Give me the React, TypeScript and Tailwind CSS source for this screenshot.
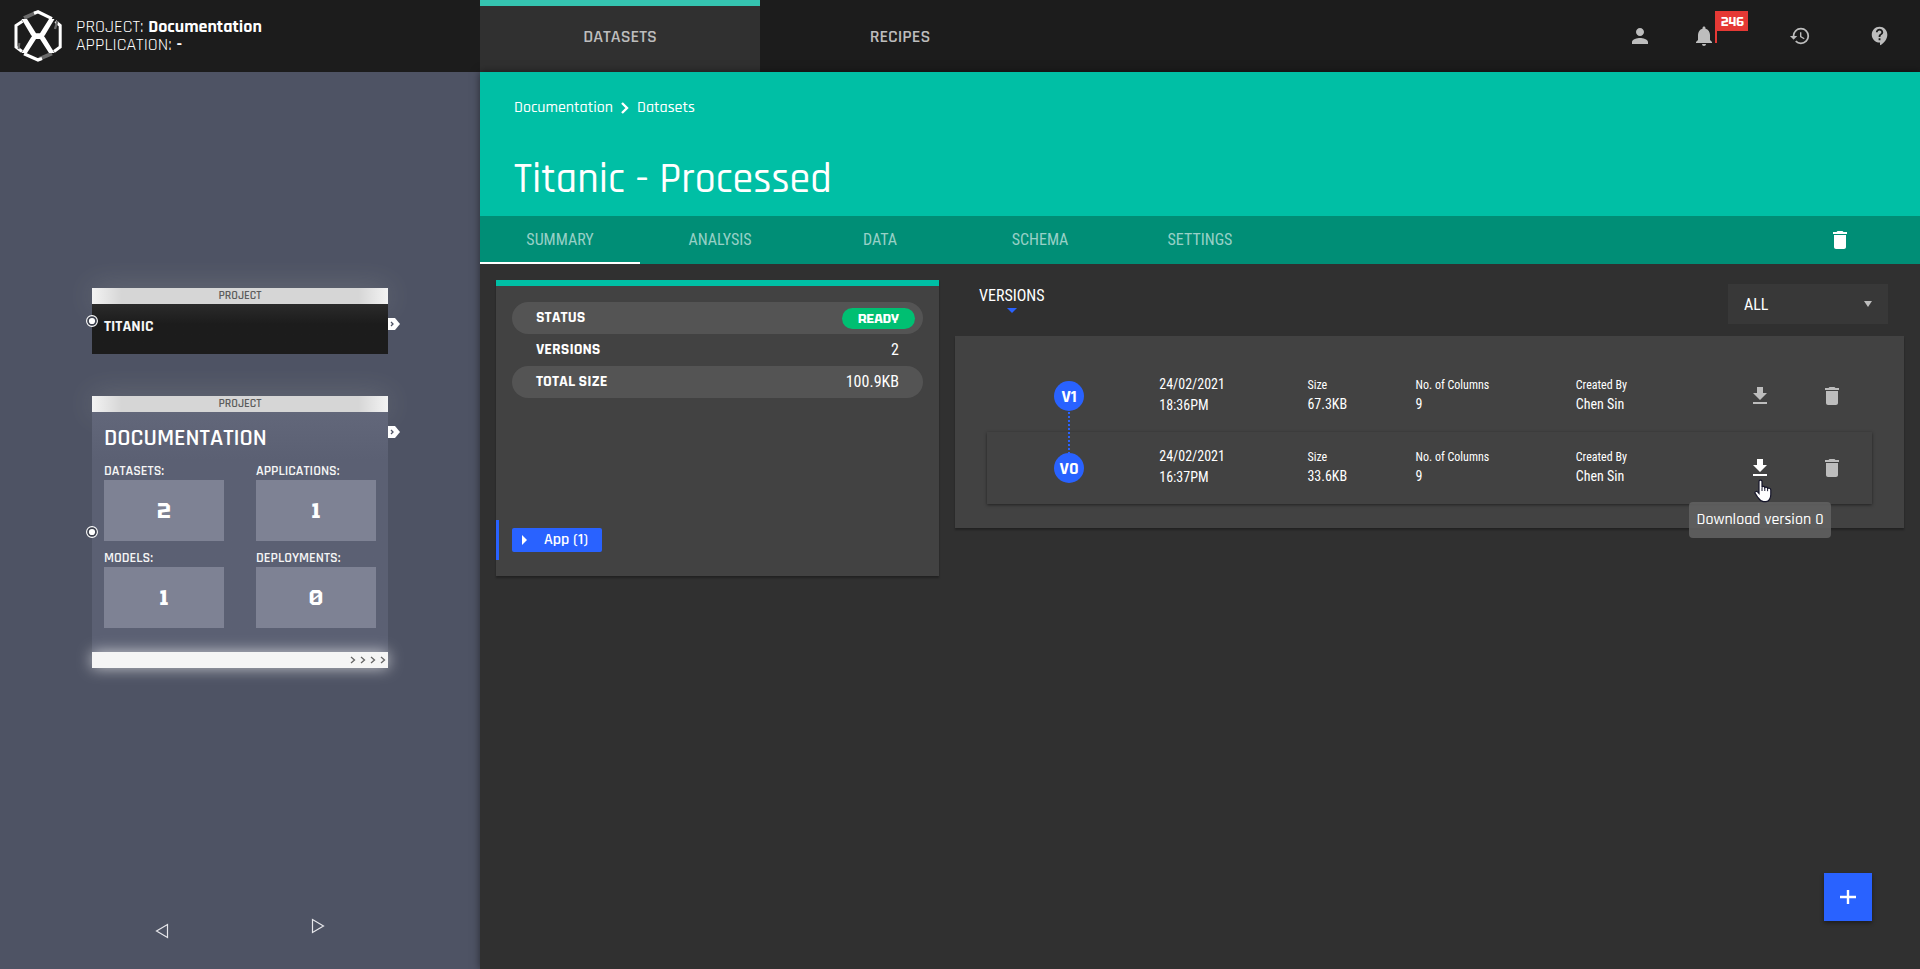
import type { ReactNode } from "react";
import {
  MdContactSupport,
  MdDelete,
  MdHistory,
  MdNotifications,
  MdPerson,
} from "react-icons/md";

function Logo() {
  return (
    <svg viewBox="0 0 48 52" className="h-[52px] w-12" fill="none" aria-hidden="true">
      <path d="M10 8 22 2.6" stroke="#6b6b6b" strokeWidth="3.6" />
      <path d="M20 3.2 24 1.8 38 8.6" stroke="#fff" strokeWidth="3.2" />
      <path d="M38 43.5 25 49" stroke="#6b6b6b" strokeWidth="3.6" />
      <path d="M10 43.8 24 50 28 48.6" stroke="#fff" strokeWidth="3.2" />
      <path d="M8.5 11.2 2 15.5V37L8 41.5" stroke="#fff" strokeWidth="3" />
      <path d="M41.5 11.5 46.2 15.5V37L40 41.5" stroke="#fff" strokeWidth="3" />
      <path d="M43.4 11 41 19" stroke="#6b6b6b" strokeWidth="2.4" />
      <path d="M5.4 33 4.6 39" stroke="#6b6b6b" strokeWidth="2" />
      <path d="M7.5 9H13L22 23.2H26L35 9H40.5L31 25 30 26.2 31 27.5 40.5 43H35L26 29H22L13 43H7.5L17 27.5 18 26.2 17 25Z" fill="#fff" />
    </svg>
  );
}

function DownloadIcon() {
  return (
    <svg viewBox="0 0 24 24" className="size-6" fill="currentColor" aria-hidden="true">
      <path d="M19 9h-4V3H9v6H5l7 7 7-7zM5 18v2h14v-2H5z" />
    </svg>
  );
}

function HandCursor() {
  return (
    <svg viewBox="0 0 18 24" className="h-6 w-[18px]" aria-hidden="true">
      <path
        d="M5 2.4C5 .6 8 .6 8 2.4V8.2C8.4 7 10.6 7.2 10.8 8.6 11.4 7.8 13.4 8 13.6 9.4 14.4 8.8 16.8 9.2 16.8 11V15.5C16.8 19 15 22.6 12 22.6H9.6C6.4 22.6 5 20 3.6 18L1.2 14.4C.4 13 2.4 11.6 3.6 12.8L5 14.4Z"
        fill="#fff"
        stroke="#15152a"
        strokeWidth="1.2"
      />
      <path d="M8 8.5V12M10.8 8.8V12M13.6 9.6V12.2" stroke="#15152a" />
    </svg>
  );
}

function Port() {
  return (
    <svg viewBox="0 0 12 12" className="size-3" fill="none" aria-hidden="true">
      <circle cx="6" cy="6" r="5.4" fill="#3c404d" stroke="#fff" strokeWidth="1.1" />
      <circle cx="6" cy="6" r="3.1" fill="#fff" />
    </svg>
  );
}

function Tag() {
  return (
    <svg viewBox="0 0 12 12" className="size-3" fill="none" aria-hidden="true">
      <path d="M0 0H7L12 6 7 12H0Z" fill="#fff" />
      <path d="M3 4 5 6 3 8" stroke="#4e5364" strokeWidth="1.3" />
    </svg>
  );
}

function CardHeader() {
  return (
    <div className="flex h-4 items-center justify-center bg-[linear-gradient(90deg,#f3f3f3,#d6d6d6_10%,#d6d6d6_90%,#f3f3f3)] text-xs font-semibold text-[#5c5c5c] shadow-[0_0_30px_rgba(245,245,220,0.2)]">
      PROJECT
    </div>
  );
}

function Stat({ label, value }: { label: string; value: number }) {
  return (
    <div>
      <dt className="h-[18px] text-sm leading-[18px] font-semibold">{label}</dt>
      <dd className="flex h-[61px] items-center justify-center bg-[#7e8294] font-['Tektur',sans-serif] text-[22px] font-bold text-white slashed-zero">
        {value}
      </dd>
    </div>
  );
}

function Sidebar() {
  return (
    <aside className="flex w-[480px] shrink-0 flex-col justify-between bg-[#4e5364] text-[#f5f5f5]">
      <div className="mx-auto mt-[216px] flex w-[296px] flex-col gap-[42px]">
        <section className="relative">
          <CardHeader />
          <div className="flex h-[50px] items-center bg-gradient-to-b from-[#2b2b2b] to-[#1c1c1c] to-40% px-3">
            <h2 className="pb-1 text-base font-bold">TITANIC</h2>
          </div>
          <span className="absolute top-[27px] -left-1.5"><Port /></span>
          <span className="absolute top-[30px] left-full"><Tag /></span>
        </section>
        <section className="relative">
          <CardHeader />
          <div className="h-60 bg-gradient-to-b from-[#62677a] to-[#5b6073] to-20% px-3 pt-2.5">
            <h2 className="text-2xl leading-8 font-semibold text-white">DOCUMENTATION</h2>
            <dl className="mt-2 grid grid-cols-2 gap-x-8 gap-y-2">
              <Stat label="DATASETS:" value={2} />
              <Stat label="APPLICATIONS:" value={1} />
              <Stat label="MODELS:" value={1} />
              <Stat label="DEPLOYMENTS:" value={0} />
            </dl>
          </div>
          <div className="flex h-4 items-center justify-end gap-1 bg-[#f5f5f5] pr-0.5 shadow-[0_0_15px_rgba(255,255,255,0.7)]">
            {[0, 1, 2, 3].map((n) => (
              <svg key={n} viewBox="0 0 6 8" className="h-2 w-1.5" fill="none" aria-hidden="true">
                <path d="M1 1 4.5 4 1 7" stroke="#666" strokeWidth="1.3" />
              </svg>
            ))}
          </div>
          <span className="absolute top-[130px] -left-1.5"><Port /></span>
          <span className="absolute top-[30px] left-full"><Tag /></span>
        </section>
      </div>
      <nav className="mb-[30px] flex h-[21px] justify-between px-[155px]">
        <button aria-label="Previous" className="self-end">
          <svg viewBox="0 0 14 16" className="h-4 w-3.5" fill="none" aria-hidden="true">
            <path d="M12.5 1.5V14.5L1.5 8Z" stroke="#e6e6ea" strokeWidth="1.2" />
          </svg>
        </button>
        <button aria-label="Next" className="self-start">
          <svg viewBox="0 0 14 16" className="h-4 w-3.5" fill="none" aria-hidden="true">
            <path d="M1.5 1.5V14.5L12.5 8Z" stroke="#e6e6ea" strokeWidth="1.2" />
          </svg>
        </button>
      </nav>
    </aside>
  );
}

function TopBar() {
  return (
    <header className="flex h-[72px] shrink-0 bg-[#1c1c1c]">
      <div className="flex w-[480px] shrink-0 items-center gap-3.5 pl-3.5 text-white">
        <Logo />
        <div className="text-lg leading-[18px] font-normal">
          <p>PROJECT: <b className="font-bold">Documentation</b></p>
          <p>APPLICATION: <b className="font-bold">-</b></p>
        </div>
      </div>
      <nav className="flex text-lg font-semibold text-[#bdbdbd]">
        <a href="#datasets" className="flex w-[280px] items-center justify-center border-t-[6px] border-[#35c4b0] bg-[#303030] pb-1">
          DATASETS
        </a>
        <a href="#recipes" className="flex w-[280px] items-center justify-center pt-0.5">RECIPES</a>
      </nav>
      <div className="ml-auto flex text-[#bdbdbd]">
        <button aria-label="Account" className="flex w-20 items-center justify-center"><MdPerson className="size-6" /></button>
        <button aria-label="Notifications" className="relative flex w-20 items-center pl-3">
          <MdNotifications className="size-6" />
          <span className="absolute top-[11px] left-[35px] flex h-8 items-start border-l-2 border-[#e53935]">
            <span className="h-5 bg-[#e53935] pr-1 pl-1 font-['Tektur',sans-serif] text-xs leading-[22px] font-bold text-white">246</span>
          </span>
        </button>
        <button aria-label="History" className="flex w-20 items-center justify-center"><MdHistory className="size-[22px]" /></button>
        <button aria-label="Help" className="flex w-20 items-center justify-center"><MdContactSupport className="size-[22px]" /></button>
      </div>
    </header>
  );
}

const tabs = ["SUMMARY", "ANALYSIS", "DATA", "SCHEMA", "SETTINGS"];

function PageHeading() {
  return (
    <div className="bg-[#00bfa5] text-white">
      <div className="h-36 px-[34px] pt-6">
        <nav className="flex items-center text-base leading-6 font-medium">
          <a href="#documentation">Documentation</a>
          <svg viewBox="0 0 8 12" className="mx-2 h-3 w-2" fill="none" aria-hidden="true">
            <path d="M1 1 6 6 1 11" stroke="#fff" strokeWidth="2.4" />
          </svg>
          <a href="#datasets">Datasets</a>
        </nav>
        <h1 className="mt-8 text-[42px] leading-14 font-medium">Titanic - Processed</h1>
      </div>
      <div className="flex h-12 items-stretch justify-between bg-[#008e76] pr-[68px] font-['Roboto_Condensed',sans-serif]">
        <div role="tablist" className="flex">
          {tabs.map((tab, i) => (
            <button
              key={tab}
              role="tab"
              aria-selected={i === 0}
              className="w-40 border-b-2 border-transparent pt-0.5 text-base text-white/60 aria-selected:border-white"
            >
              {tab}
            </button>
          ))}
        </div>
        <button aria-label="Delete dataset"><MdDelete className="size-6" /></button>
      </div>
    </div>
  );
}

function InfoRow({ label, children }: { label: string; children: ReactNode }) {
  return (
    <div className="flex h-8 items-center justify-between rounded-full pr-2 pl-6 odd:bg-[#545454]">
      <dt className="text-base font-bold">{label}</dt>
      <dd>{children}</dd>
    </div>
  );
}

function SummaryCard() {
  return (
    <section className="flex h-74 flex-col border-t-[6px] border-[#00bfa5] bg-[#424242] pt-4 pb-4 shadow-[0_2px_2px_rgba(0,0,0,0.3)]">
      <dl className="px-4 text-white">
        <InfoRow label="STATUS">
          <span className="block h-[21px] rounded-full bg-[#00bf72] px-4 font-['Tektur',sans-serif] text-[13px] leading-[22px] font-bold">READY</span>
        </InfoRow>
        <InfoRow label="VERSIONS"><span className="pr-4 font-['Roboto_Condensed',sans-serif]">2</span></InfoRow>
        <InfoRow label="TOTAL SIZE"><span className="pr-4 font-['Roboto_Condensed',sans-serif]">100.9KB</span></InfoRow>
      </dl>
      <div className="mt-auto flex h-10 items-center border-l-[3px] border-[#2962ff] pl-[13px]">
        <button className="flex h-6 items-center gap-4 rounded-xs bg-[#2962ff] pr-3.5 pl-2.5 text-base font-semibold text-white">
          <svg viewBox="0 0 6 10" className="h-2.5 w-1.5" fill="#fff" aria-hidden="true"><path d="M0 0 5 5 0 10Z" /></svg>
          App (1)
        </button>
      </div>
    </section>
  );
}

function Field({ label, value }: { label: string; value: string }) {
  return (
    <div className="pt-3.5">
      <p className="text-xs leading-[22px]">{label}</p>
      <p className="text-sm leading-4">{value}</p>
    </div>
  );
}

const versions = [
  { id: 1, time: "18:36PM", size: "67.3KB" },
  { id: 0, time: "16:37PM", size: "33.6KB" },
];

function VersionList() {
  return (
    <ul className="bg-[#424242] px-8 py-6 font-['Roboto_Condensed',sans-serif] text-white shadow-[0_2px_2px_rgba(0,0,0,0.3)]">
      {versions.map((v) => (
        <li
          key={v.id}
          className="grid h-[72px] grid-cols-[172fr_148fr_108fr_160fr_148fr_72px_72px] pr-1 last:shadow-[0_1px_3px_rgba(0,0,0,0.5)]"
        >
          <div className="relative flex items-center justify-center pr-2">
            <span className="flex size-[30px] items-center justify-center rounded-full bg-[#2962ff] pt-0.5 font-['Rajdhani',sans-serif] text-lg font-bold">
              V{v.id}
            </span>
            {v.id > 0 && (
              <svg viewBox="0 0 2 41" className="absolute top-[52px] z-10 h-[41px] w-0.5" aria-hidden="true">
                <path d="M1 0V41" stroke="#2962ff" strokeWidth="2" strokeDasharray="2 2" />
              </svg>
            )}
          </div>
          <p className="pt-3.5 text-sm leading-[21px]">24/02/2021<br />{v.time}</p>
          <Field label="Size" value={v.size} />
          <Field label="No. of Columns" value="9" />
          <Field label="Created By" value="Chen Sin" />
          <div className="relative flex items-center justify-center">
            <button aria-label={`Download version ${v.id}`} className={v.id === 0 ? "text-white" : "text-[#bdbdbd]"}>
              <DownloadIcon />
            </button>
            {v.id === 0 && (
              <>
                <span className="absolute top-[47px] left-[30px] z-20"><HandCursor /></span>
                <span
                  role="tooltip"
                  className="absolute top-[70px] z-10 h-9 rounded bg-[#616161]/90 px-2 font-['Rajdhani',sans-serif] text-base leading-9 font-medium whitespace-nowrap"
                >
                  Download version 0
                </span>
              </>
            )}
          </div>
          <button aria-label={`Delete version ${v.id}`} className="flex items-center justify-center text-[#bdbdbd]">
            <MdDelete className="size-6" />
          </button>
        </li>
      ))}
    </ul>
  );
}

function VersionsPanel() {
  return (
    <section>
      <div className="flex h-14 items-start justify-between pr-4 pl-6 font-['Roboto_Condensed',sans-serif] text-white">
        <h2 className="flex flex-col items-center pt-1 text-base leading-6">
          VERSIONS
          <svg viewBox="0 0 10 5" className="h-[5px] w-2.5" fill="#2962ff" aria-hidden="true"><path d="M0 0H10L5 5Z" /></svg>
        </h2>
        <div className="relative mt-1 w-40">
          <select aria-label="Filter versions" className="h-10 w-full appearance-none bg-[#383838] px-4 pt-0.5 text-base text-white">
            <option>ALL</option>
          </select>
          <svg viewBox="0 0 8 6" className="pointer-events-none absolute top-[17px] right-4 h-1.5 w-2" fill="#bdbdbd" aria-hidden="true">
            <path d="M0 0H8L4 6Z" />
          </svg>
        </div>
      </div>
      <VersionList />
    </section>
  );
}

export default function App() {
  return (
    <div className="flex min-h-screen flex-col bg-[#303030] font-['Rajdhani',sans-serif]">
      <TopBar />
      <div className="flex flex-1">
        <Sidebar />
        <main className="flex-1 shadow-[0_0_8px_rgba(0,0,0,0.5)]">
          <PageHeading />
          <div className="grid grid-cols-[443fr_949fr] items-start gap-4 p-4">
            <SummaryCard />
            <VersionsPanel />
          </div>
        </main>
      </div>
      <button aria-label="Add" className="fixed right-12 bottom-12 flex size-12 items-center justify-center bg-[#2962ff] shadow-[0_2px_4px_rgba(0,0,0,0.4)]">
        <svg viewBox="0 0 16 16" className="size-4" fill="none" aria-hidden="true">
          <path d="M0 8H16M8 1V15" stroke="#fff" strokeWidth="2.4" />
        </svg>
      </button>
    </div>
  );
}
